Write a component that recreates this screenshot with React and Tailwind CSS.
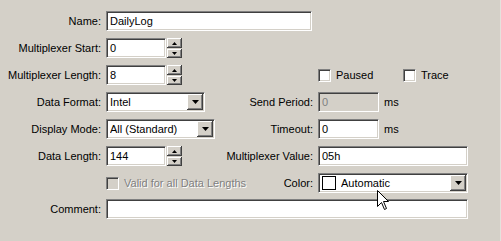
import React from "react";

const sunken =
  "bg-white border border-t-[#808080] border-l-[#808080] border-b-white border-r-white shadow-[inset_1px_1px_0_#404040,inset_-1px_-1px_0_#d4d0c8]";
const raised =
  "bg-[#d4d0c8] shadow-[inset_-1px_-1px_0_#404040,inset_1px_1px_0_#ffffff,inset_-2px_-2px_0_#808080]";

function Label({ children, w = "w-[101px]" }) {
  return <div className={`${w} text-right shrink-0`}>{children}</div>;
}

function TextBox({ w, value, disabled }) {
  return (
    <div
      className={`${w} h-[20px] ${sunken} ${disabled ? "!bg-[#d4d0c8] text-[#808080]" : ""} flex items-center pl-[3px] shrink-0`}
    >
      {value}
    </div>
  );
}

function Spinner() {
  return (
    <div className="ml-[1px] w-[15px] h-[20px] flex flex-col gap-[1px] shrink-0">
      <div className={`${raised} h-[10px] flex items-center justify-center`}>
        <svg width="5" height="3" viewBox="0 0 5 3">
          <polygon points="2.5,0 5,3 0,3" fill="#000" />
        </svg>
      </div>
      <div className={`${raised} h-[9px] flex items-center justify-center`}>
        <svg width="5" height="3" viewBox="0 0 5 3">
          <polygon points="0,0 5,0 2.5,3" fill="#000" />
        </svg>
      </div>
    </div>
  );
}

function DropButton() {
  return (
    <div className={`${raised} w-[16px] h-[16px] mr-[1px] flex items-center justify-center shrink-0`}>
      <svg width="7" height="4" viewBox="0 0 7 4">
        <polygon points="0,0 7,0 3.5,4" fill="#000" />
      </svg>
    </div>
  );
}

function Select({ w, value, children }) {
  return (
    <div className={`${w} h-[20px] ${sunken} flex items-center pl-[3px] shrink-0`}>
      {children}
      <div className="flex-1 truncate">{value}</div>
      <DropButton />
    </div>
  );
}

function Check({ disabled }) {
  return (
    <div
      className={`w-[13px] h-[13px] shrink-0 border border-t-[#808080] border-l-[#808080] border-b-white border-r-white shadow-[inset_1px_1px_0_#404040,inset_-1px_-1px_0_#d4d0c8] ${
        disabled ? "bg-[#d4d0c8]" : "bg-white"
      }`}
    />
  );
}

export default function App() {
  return (
    <div
      className="relative w-[501px] h-[241px] overflow-hidden bg-[#d4d0c8] text-[11px] text-black leading-none whitespace-nowrap border-r border-r-[#e4e2dc]"
      style={{ fontFamily: '"Liberation Sans", Arial, sans-serif' }}
    >
      <div className="pt-[11px] flex flex-col gap-[7px]">
        {/* Name */}
        <div className="flex items-center h-[20px]">
          <Label>Name:</Label>
          <div className="ml-[5px]">
            <TextBox w="w-[206px]" value="DailyLog" />
          </div>
        </div>

        {/* Multiplexer Start */}
        <div className="flex items-center h-[20px]">
          <Label>Multiplexer Start:</Label>
          <div className="ml-[5px] flex items-center">
            <TextBox w="w-[60px]" value="0" />
            <Spinner />
          </div>
        </div>

        {/* Multiplexer Length */}
        <div className="flex items-center h-[20px]">
          <div className="w-[218px] flex items-center shrink-0">
            <Label>Multiplexer Length:</Label>
            <div className="ml-[5px] flex items-center">
              <TextBox w="w-[60px]" value="8" />
              <Spinner />
            </div>
          </div>
          <div className="ml-[100px] flex items-center">
            <div className="w-[85px] flex items-center">
              <Check />
              <span className="ml-[5px]">Paused</span>
            </div>
            <div className="flex items-center">
              <Check />
              <span className="ml-[5px]">Trace</span>
            </div>
          </div>
        </div>

        {/* Data Format / Send Period */}
        <div className="flex items-center h-[20px]">
          <div className="w-[218px] flex items-center shrink-0">
            <Label>Data Format:</Label>
            <div className="ml-[5px]">
              <Select w="w-[99px]" value="Intel" />
            </div>
          </div>
          <Label w="w-[95px]">Send Period:</Label>
          <div className="ml-[5px] flex items-center">
            <TextBox w="w-[61px]" value="0" disabled />
            <span className="ml-[5px]">ms</span>
          </div>
        </div>

        {/* Display Mode / Timeout */}
        <div className="flex items-center h-[20px]">
          <div className="w-[218px] flex items-center shrink-0">
            <Label>Display Mode:</Label>
            <div className="ml-[5px]">
              <Select w="w-[109px]" value="All (Standard)" />
            </div>
          </div>
          <Label w="w-[95px]">Timeout:</Label>
          <div className="ml-[5px] flex items-center">
            <TextBox w="w-[61px]" value="0" />
            <span className="ml-[5px]">ms</span>
          </div>
        </div>

        {/* Data Length / Multiplexer Value */}
        <div className="flex items-center h-[20px]">
          <div className="w-[218px] flex items-center shrink-0">
            <Label>Data Length:</Label>
            <div className="ml-[5px] flex items-center">
              <TextBox w="w-[60px]" value="144" />
              <Spinner />
            </div>
          </div>
          <Label w="w-[95px]">Multiplexer Value:</Label>
          <div className="ml-[5px]">
            <TextBox w="w-[150px]" value="05h" />
          </div>
        </div>

        {/* Valid / Color */}
        <div className="flex items-center h-[20px]">
          <div className="w-[218px] flex items-center shrink-0">
            <div className="w-[101px] shrink-0" />
            <div className="ml-[5px] flex items-center">
              <Check disabled />
              <span className="ml-[5px] text-[#808080] [text-shadow:1px_1px_0_#ffffff]">
                Valid for all Data Lengths
              </span>
            </div>
          </div>
          <Label w="w-[95px]">Color:</Label>
          <div className="ml-[5px]">
            <Select w="w-[150px]" value="Automatic">
              <div className="w-[14px] h-[14px] border border-black bg-white mr-[5px] shrink-0" />
            </Select>
          </div>
        </div>

        {/* Comment */}
        <div className="flex items-center h-[20px] -mt-[1px]">
          <Label>Comment:</Label>
          <div className="ml-[5px]">
            <TextBox w="w-[362px]" value="" />
          </div>
        </div>
      </div>

      {/* mouse cursor */}
      <svg
        className="absolute left-[377px] top-[190px]"
        width="13"
        height="21"
        viewBox="0 0 13 21"
      >
        <polygon
          points="0.5,0.5 0.5,16.5 4.5,12.5 7.5,19.5 9.5,18.5 6.5,11.5 11.5,11.5"
          fill="#fff"
          stroke="#000"
          strokeWidth="1"
          strokeLinejoin="miter"
        />
      </svg>
    </div>
  );
}
